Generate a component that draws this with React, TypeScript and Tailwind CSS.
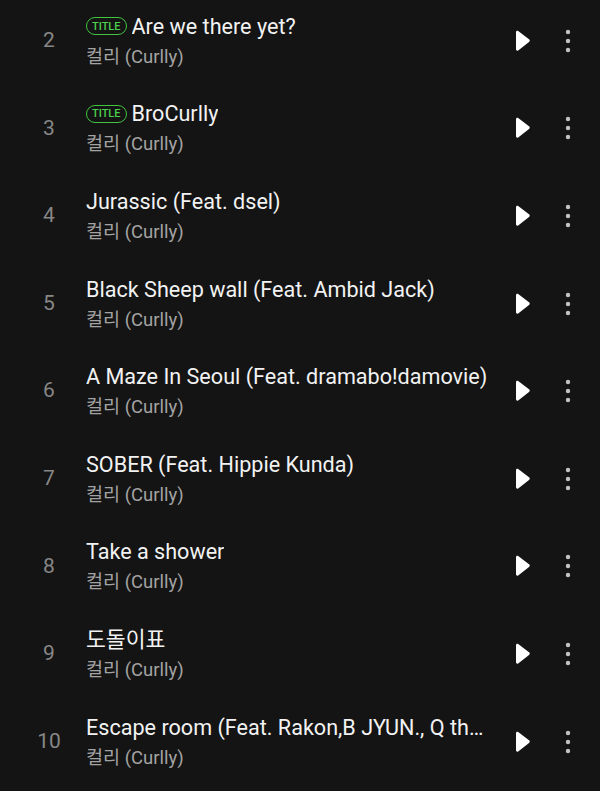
import React from 'react';

interface Track {
  no: number;
  title: string;
  isTitle?: boolean;
}

const tracks: Track[] = [
  { no: 2, title: 'Are we there yet?', isTitle: true },
  { no: 3, title: 'BroCurlly', isTitle: true },
  { no: 4, title: 'Jurassic (Feat. dsel)' },
  { no: 5, title: 'Black Sheep wall (Feat. Ambid Jack)' },
  { no: 6, title: 'A Maze In Seoul (Feat. dramabo!damovie)' },
  { no: 7, title: 'SOBER (Feat. Hippie Kunda)' },
  { no: 8, title: 'Take a shower' },
  { no: 9, title: '도돌이표' },
  { no: 10, title: 'Escape room (Feat. Rakon,B JYUN., Q the Trumpet)' },
];

const font = { fontFamily: 'Roboto, "Noto Sans CJK KR", sans-serif' };

const PlayIcon = () => (
  <svg width="18" height="22" viewBox="0 0 18 22" fill="#ffffff">
    <path d="M3 2.2 C3 1 4.2 0.4 5.2 1 L16 9.3 C17 10 17 11.3 16 12 L5.2 20.4 C4.2 21 3 20.4 3 19.2 Z" />
  </svg>
);

const MoreIcon = () => (
  <svg width="8" height="24" viewBox="0 0 8 24" fill="#c4c4c4">
    <circle cx="4" cy="3" r="2.2" />
    <circle cx="4" cy="12" r="2.2" />
    <circle cx="4" cy="21" r="2.2" />
  </svg>
);

const TrackRow: React.FC<{ track: Track }> = ({ track }) => (
  <div className="flex items-center h-[87.6px]">
    <div className="w-[86px] pl-[12px] text-center text-[21px] text-[#878787] shrink-0">
      {track.no}
    </div>
    <div className="flex flex-col gap-[4px] w-[404px] min-w-0">
      <div className="flex items-center h-[29px] min-w-0">
        {track.isTitle && (
          <span className="shrink-0 mr-[5px] h-[18px] px-[5px] flex items-center rounded-full border-[1.5px] border-[#3fc53f] text-[#4ccf4c] text-[11px] leading-none font-medium">
            TITLE
          </span>
        )}
        <span className="text-[21.6px] leading-[29px] text-[#f2f2f2] truncate">{track.title}</span>
      </div>
      <div className="text-[18.5px] leading-[25px] text-[#a3a3a3]">컬리 (Curlly)</div>
    </div>
    <div className="ml-[22px] w-[20px] flex justify-center shrink-0">
      <PlayIcon />
    </div>
    <div className="ml-[32px] w-[8px] flex justify-center shrink-0">
      <MoreIcon />
    </div>
  </div>
);

const App = () => {
  return (
    <div className="w-[600px] h-[791px] bg-[#141414] overflow-hidden" style={font}>
      <div className="mt-[-3px]">
        {tracks.map((t) => (
          <TrackRow key={t.no} track={t} />
        ))}
      </div>
    </div>
  );
};

export default App;
